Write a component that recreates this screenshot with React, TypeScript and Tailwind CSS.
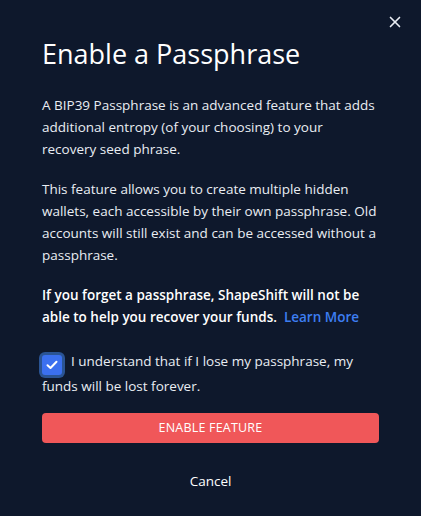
import { X } from "lucide-react"

export default function App() {
  return (
    <div
      className="relative w-full h-[516px] bg-[#0e182c] text-[#e9edf3] px-[42px] pt-[37px]"
      style={{ fontFamily: '"Open Sans", "Noto Sans", sans-serif' }}
    >
      <button className="absolute top-[11px] right-[15px] p-[2px] text-[#e9edf3]">
        <X className="size-[18px]" strokeWidth={2.2} />
      </button>

      <h1 className="text-[27px] leading-[34px] font-normal text-white">Enable a Passphrase</h1>

      <div className="mt-[23px] text-[13.5px] leading-[22px] space-y-[18px]">
        <p>
          A BIP39 Passphrase is an advanced feature that adds additional entropy (of your choosing) to your
          <br />
          recovery seed phrase.
        </p>
        <p>
          This feature allows you to create multiple hidden wallets, each accessible by their own passphrase.
          Old accounts will still exist and can be accessed without a passphrase.
        </p>
        <p className="font-semibold text-white">
          If you forget a passphrase, ShapeShift will not be able to help you recover your funds.
          <a className="ml-[7px] font-semibold text-[#3d7ef2]">Learn More</a>
        </p>
      </div>

      <div className="mt-[22px] text-[13.5px] leading-[22px]">
        <span className="inline-flex items-center justify-center w-5 h-5 mr-[9px] align-[-4px] rounded-[3px] bg-[#3b70ef] ring-3 ring-[#2a5494]">
          <svg viewBox="0 0 12 10" className="w-[12px] h-[10px]" fill="none">
            <path d="M1.5 5.2 4.5 8 10.5 1.8" stroke="white" strokeWidth="2" strokeLinecap="round" strokeLinejoin="round" />
          </svg>
        </span>
        I understand that if I lose my passphrase, my funds will be lost forever.
      </div>

      <button className="mt-[16px] w-full h-[30px] rounded-[4px] bg-[#f05759] text-white text-[12.5px] font-medium tracking-[0.2px] uppercase">
        Enable Feature
      </button>

      <div className="mt-[27px] text-center text-[13.5px] leading-[22px] font-medium text-white">Cancel</div>
    </div>
  )
}
